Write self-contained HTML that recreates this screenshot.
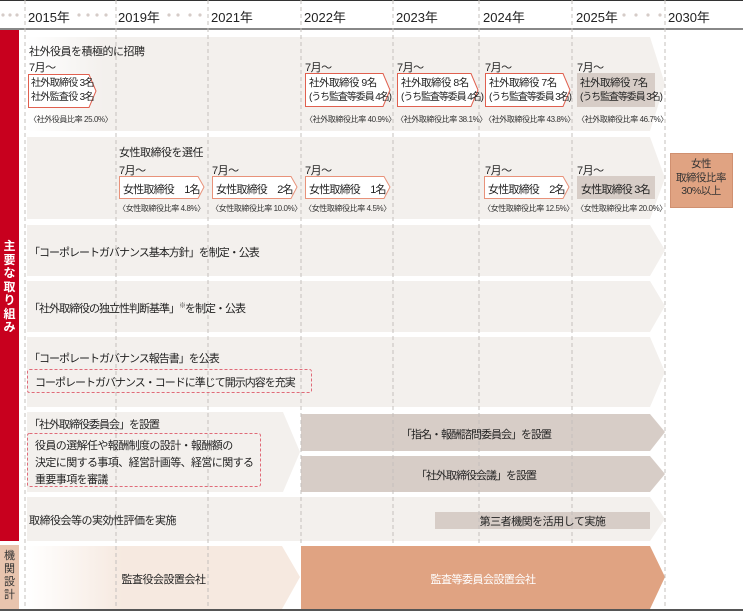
<!DOCTYPE html>
<html><head><meta charset="utf-8"><style>
*{margin:0;padding:0;box-sizing:border-box}
body{width:743px;height:612px;position:relative;background:#fff;font-family:"Liberation Sans","Noto Sans CJK JP",sans-serif;color:#222;overflow:hidden}
.a{position:absolute;white-space:nowrap}
.yr{position:absolute;top:7px;font-size:13px;color:#222}
.t{font-size:11px;letter-spacing:-0.5px}
.w{letter-spacing:-1px}
.s{font-size:8px;color:#333;letter-spacing:-0.4px}
.bx{position:absolute;font-size:10.5px;line-height:14px;letter-spacing:-0.5px}
.bx i{font-style:normal;font-size:10px;letter-spacing:-1.1px}
</style></head><body>
<div class="a" style="left:0;top:0;width:743px;height:1px;background:#333"></div>
<div class="a" style="left:0;top:28px;width:743px;height:2px;background:#888"></div>
<div class="yr" style="left:28px">2015年</div>
<div class="yr" style="left:118px">2019年</div>
<div class="yr" style="left:211px">2021年</div>
<div class="yr" style="left:304px">2022年</div>
<div class="yr" style="left:396px">2023年</div>
<div class="yr" style="left:483px">2024年</div>
<div class="yr" style="left:576px">2025年</div>
<div class="yr" style="left:668px">2030年</div>
<svg class="a" style="left:0;top:0" width="743" height="30">
<g fill="#d5ccc8">
<circle cx="3" cy="15" r="1.6"/><circle cx="10" cy="15" r="1.6"/><circle cx="17" cy="15" r="1.6"/>
<circle cx="79" cy="15" r="1.6"/><circle cx="88" cy="15" r="1.6"/><circle cx="97" cy="15" r="1.6"/><circle cx="106" cy="15" r="1.6"/>
<circle cx="169" cy="15" r="1.6"/><circle cx="178" cy="15" r="1.6"/><circle cx="190" cy="15" r="1.6"/><circle cx="200" cy="15" r="1.6"/>
<circle cx="624" cy="15" r="1.6"/><circle cx="636" cy="15" r="1.6"/><circle cx="648" cy="15" r="1.6"/><circle cx="660" cy="15" r="1.6"/>
</g></svg>

<div class="a" style="left:0;top:30px;width:19px;height:511px;background:#c8001e"></div>
<div class="a" style="left:0;top:240px;width:19px;color:#fff;font-size:12px;line-height:13.5px;text-align:center;white-space:normal;font-weight:bold">主<br>要<br>な<br>取<br>り<br>組<br>み</div>
<div class="a" style="left:0;top:545px;width:19px;height:64px;background:#e8c4ae"></div>
<div class="a" style="left:0;top:550px;width:19px;color:#333;font-size:11px;line-height:13px;text-align:center;white-space:normal">機<br>関<br>設<br>計</div>

<svg class="a" style="left:0;top:0" width="743" height="612">
<defs>
<linearGradient id="g1" x1="0" x2="1"><stop offset="0" stop-color="#fff"/><stop offset="0.12" stop-color="#f3f0ed"/></linearGradient>
<linearGradient id="g2" x1="0" x2="1"><stop offset="0" stop-color="#fff"/><stop offset="0.35" stop-color="#f6e9e0"/></linearGradient>
</defs>
<polygon points="27,37 650,37 665,84 650,131 27,131" fill="url(#g1)"/>
<polygon points="27,137 650,137 665,178 650,219 27,219" fill="#f3f0ed"/>
<polygon points="27,225 650,225 665,250 650,276 27,276" fill="#f3f0ed"/>
<polygon points="27,281 650,281 665,306 650,332 27,332" fill="#f3f0ed"/>
<polygon points="27,337 650,337 665,372 650,407 27,407" fill="#f3f0ed"/>
<polygon points="27,412 283,412 300,452 283,492 27,492" fill="#f3f0ed"/>
<polygon points="301,414 650,414 665,432 650,451 301,451" fill="#d7cdc7"/>
<polygon points="301,456 650,456 665,474 650,492 301,492" fill="#d7cdc7"/>
<polygon points="27,497 650,497 665,519 650,541 27,541" fill="#f3f0ed"/>
<rect x="435" y="512" width="215" height="17" fill="#d7cdc7"/>
<polygon points="27,546 282,546 300,577 282,609 27,609" fill="url(#g2)"/>
<polygon points="301,546 650,546 665,577 650,609 301,609" fill="#e0a382"/>
<g stroke="#c4c0bd" stroke-width="1" stroke-dasharray="4,3">
<line x1="25" y1="0" x2="25" y2="609"/><line x1="116" y1="0" x2="116" y2="609"/>
<line x1="208" y1="0" x2="208" y2="609"/><line x1="301" y1="0" x2="301" y2="546"/>
<line x1="393" y1="0" x2="393" y2="546"/><line x1="479" y1="0" x2="479" y2="546"/>
<line x1="572" y1="0" x2="572" y2="546"/><line x1="665" y1="0" x2="665" y2="609"/>
</g>
<g fill="#fff" stroke="#e0604f" stroke-width="1">
<polygon points="28.5,74.5 89,74.5 96,91 89,107.5 28.5,107.5"/>
<polygon points="305.5,73.5 383,73.5 390,90 383,106.5 305.5,106.5"/>
<polygon points="397.5,73.5 471,73.5 478,90 471,106.5 397.5,106.5"/>
<polygon points="485.5,73.5 563,73.5 570,90 563,106.5 485.5,106.5"/>
</g>
<rect x="577" y="73" width="78" height="34" fill="#d7cdc7"/>
<g fill="#fff" stroke="#e8927a" stroke-width="1">
<polygon points="119.5,176.5 198,176.5 204,187 198,198.5 119.5,198.5"/>
<polygon points="212.5,176.5 291,176.5 297,187 291,198.5 212.5,198.5"/>
<polygon points="305.5,176.5 384,176.5 390,187 384,198.5 305.5,198.5"/>
<polygon points="484.5,176.5 563,176.5 569,187 563,198.5 484.5,198.5"/>
</g>
<rect x="577" y="176" width="78" height="23" fill="#d7cdc7"/>
<rect x="670.5" y="153.5" width="62" height="54" fill="#e0a382" stroke="#d09070"/>
<g fill="none" stroke="#e06a78" stroke-width="1" stroke-dasharray="3,2">
<rect x="27.5" y="369.5" width="284" height="23" rx="2"/>
<rect x="27.5" y="433.5" width="233" height="53" rx="2"/>
</g>
<line x1="0" y1="610" x2="743" y2="610" stroke="#555" stroke-width="2"/>
</svg>

<div class="a t" style="left:29px;top:43px">社外役員を積極的に招聘</div>
<div class="a t" style="left:29px;top:59px">7月〜</div>
<div class="bx a" style="left:31px;top:77px;font-size:10px;letter-spacing:-0.7px">社外取締役 3名<br>社外監査役 3名</div>
<div class="a s" style="left:29px;top:114px">〈社外役員比率 25.0%〉</div>
<div class="a t" style="left:305px;top:59px">7月〜</div>
<div class="a t" style="left:397px;top:59px">7月〜</div>
<div class="a t" style="left:485px;top:59px">7月〜</div>
<div class="a t" style="left:577px;top:59px">7月〜</div>
<div class="bx a" style="left:309px;top:76px">社外取締役 9名<br><i>(うち監査等委員 4名)</i></div>
<div class="bx a" style="left:401px;top:76px">社外取締役 8名<br><i>(うち監査等委員 4名)</i></div>
<div class="bx a" style="left:489px;top:76px">社外取締役 7名<br><i>(うち監査等委員 3名)</i></div>
<div class="bx a" style="left:580px;top:76px">社外取締役 7名<br><i>(うち監査等委員 3名)</i></div>
<div class="a s" style="left:305px;top:114px">〈社外取締役比率 40.9%〉</div>
<div class="a s" style="left:396px;top:114px">〈社外取締役比率 38.1%〉</div>
<div class="a s" style="left:484px;top:114px">〈社外取締役比率 43.8%〉</div>
<div class="a s" style="left:577px;top:114px">〈社外取締役比率 46.7%〉</div>
<div class="a t" style="left:119px;top:144px">女性取締役を選任</div>
<div class="a t" style="left:119px;top:162px">7月〜</div>
<div class="a t" style="left:212px;top:162px">7月〜</div>
<div class="a t" style="left:305px;top:162px">7月〜</div>
<div class="a t" style="left:485px;top:162px">7月〜</div>
<div class="a t" style="left:577px;top:162px">7月〜</div>
<div class="a t" style="left:123px;top:181px;letter-spacing:-0.8px">女性取締役　1名</div>
<div class="a t" style="left:216px;top:181px;letter-spacing:-0.8px">女性取締役　2名</div>
<div class="a t" style="left:309px;top:181px;letter-spacing:-0.8px">女性取締役　1名</div>
<div class="a t" style="left:488px;top:181px;letter-spacing:-0.8px">女性取締役　2名</div>
<div class="a t" style="left:581px;top:181px;letter-spacing:-0.8px">女性取締役 3名</div>
<div class="a s" style="left:118px;top:203px">〈女性取締役比率 4.8%〉</div>
<div class="a s" style="left:211px;top:203px">〈女性取締役比率 10.0%〉</div>
<div class="a s" style="left:304px;top:203px">〈女性取締役比率 4.5%〉</div>
<div class="a s" style="left:483px;top:203px">〈女性取締役比率 12.5%〉</div>
<div class="a s" style="left:576px;top:203px">〈女性取締役比率 20.0%〉</div>
<div class="a" style="left:670px;top:158px;width:62px;text-align:center;font-size:10.5px;line-height:13.5px;white-space:normal;color:#333;letter-spacing:-0.5px">女性<br>取締役比率<br>30%以上</div>
<div class="a t w" style="left:29px;top:244px">「コーポレートガバナンス基本方針」を制定・公表</div>
<div class="a t w" style="left:29px;top:300px">「社外取締役の独立性判断基準」<sup style="font-size:7px">※</sup>を制定・公表</div>
<div class="a t w" style="left:29px;top:350px">「コーポレートガバナンス報告書」を公表</div>
<div class="a t w" style="left:35px;top:374px">コーポレートガバナンス・コードに準じて開示内容を充実</div>
<div class="a t w" style="left:29px;top:416px">「社外取締役委員会」を設置</div>
<div class="a t" style="left:35px;top:438px;line-height:17px;letter-spacing:-0.6px">役員の選解任や報酬制度の設計・報酬額の<br>決定に関する事項、経営計画等、経営に関する<br>重要事項を審議</div>
<div class="a t w" style="left:301px;top:426px;width:350px;text-align:center">「指名・報酬諮問委員会」を設置</div>
<div class="a t w" style="left:301px;top:467px;width:350px;text-align:center">「社外取締役会議」を設置</div>
<div class="a t" style="left:29px;top:512px">取締役会等の実効性評価を実施</div>
<div class="a t" style="left:435px;top:513px;width:215px;text-align:center">第三者機関を活用して実施</div>
<div class="a t" style="left:27px;top:571px;width:273px;text-align:center">監査役会設置会社</div>
<div class="a t" style="left:301px;top:571px;width:364px;text-align:center;color:#fff">監査等委員会設置会社</div>
</body></html>
